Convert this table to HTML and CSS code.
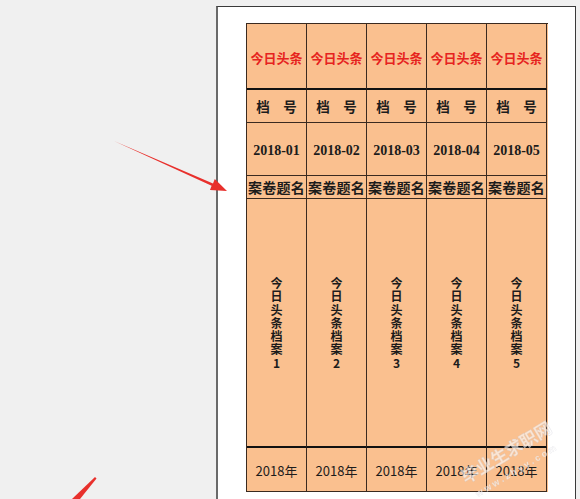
FILE: index.html
```html
<!DOCTYPE html>
<html lang="zh-CN">
<head>
<meta charset="utf-8">
<title>档案盒标签</title>
<link rel="stylesheet" href="styles.css">
</head>
<body>
<div class="page">
  <div class="sheet">
    <div class="cell r1">今日头条</div>
    <div class="cell r1">今日头条</div>
    <div class="cell r1">今日头条</div>
    <div class="cell r1">今日头条</div>
    <div class="cell r1">今日头条</div>

    <div class="cell r2">档　号</div>
    <div class="cell r2">档　号</div>
    <div class="cell r2">档　号</div>
    <div class="cell r2">档　号</div>
    <div class="cell r2">档　号</div>

    <div class="cell r3">2018-01</div>
    <div class="cell r3">2018-02</div>
    <div class="cell r3">2018-03</div>
    <div class="cell r3">2018-04</div>
    <div class="cell r3">2018-05</div>

    <div class="cell r4">案卷题名</div>
    <div class="cell r4">案卷题名</div>
    <div class="cell r4">案卷题名</div>
    <div class="cell r4">案卷题名</div>
    <div class="cell r4">案卷题名</div>

    <div class="cell r5"><span class="vert">今日头条档案1</span></div>
    <div class="cell r5"><span class="vert">今日头条档案2</span></div>
    <div class="cell r5"><span class="vert">今日头条档案3</span></div>
    <div class="cell r5"><span class="vert">今日头条档案4</span></div>
    <div class="cell r5"><span class="vert">今日头条档案5</span></div>

    <div class="cell r6">2018年</div>
    <div class="cell r6">2018年</div>
    <div class="cell r6">2018年</div>
    <div class="cell r6">2018年</div>
    <div class="cell r6">2018年</div>
  </div>
</div>

<svg class="overlay" width="580" height="499" viewBox="0 0 580 499" xmlns="http://www.w3.org/2000/svg">
  <polygon points="114,141 213,183.4 214.8,179 227,191 210,190 211.6,185.8" fill="#e8302c"/>
  <polygon points="95,477 96.5,478.5 80,499 72,499" fill="#e8302c"/>
  <g class="wm">
    <text x="0" y="0" transform="translate(466,484) rotate(-31)" class="wm-big">毕业生求职网</text>
    <text x="0" y="0" transform="translate(478,497) rotate(-31)" class="wm-small">w w w . z h y y . c o m</text>
  </g>
</svg>
</body>
</html>
```

FILE: styles.css
```css
html, body {
  margin: 0;
  padding: 0;
  height: 100%;
  overflow: hidden;
}

body {
  background: #f0f0f0;
  font-family: "Noto Sans CJK SC", "Noto Sans", sans-serif;
  color: #1c1c1c;
}

.page {
  box-sizing: border-box;
  width: 360px;
  height: 494px;
  margin: 6px 0 0 216px;
  background: #ffffff;
  border: 1px solid #3a3a3a;
  border-left: 2px solid #6a6a6a;
  padding: 16px 0 0 28px;
}

.sheet {
  display: grid;
  grid-template-columns: repeat(5, 60px);
  width: 301px;
  border-top: 1px solid #3a2a20;
  border-left: 1px solid #3a2a20;
  background: #fac08f;
}

.cell {
  box-sizing: border-box;
  border-right: 1px solid #3a2a20;
  border-bottom: 1px solid #3a2a20;
  display: flex;
  align-items: center;
  justify-content: center;
  white-space: nowrap;
  font-weight: 700;
  font-size: 14px;
  line-height: 1;
}

.r1 {
  height: 66px;
  border-bottom: 2px solid #111;
  color: #e6231e;
  font-size: 13px;
  padding-top: 2px;
}

.r2 {
  height: 33px;
  font-size: 13.5px;
  padding-top: 1px;
}

.r3 {
  height: 53px;
  font-family: "Liberation Serif", "Noto Sans CJK SC", serif;
  font-size: 14px;
  padding-top: 3px;
}

.r4 {
  height: 23px;
  font-size: 14px;
  letter-spacing: 0.3px;
}

.r5 {
  height: 249px;
  border-bottom: 2px solid #111;
}

.vert {
  display: block;
  width: 1em;
  font-size: 12px;
  line-height: 13.3px;
  white-space: normal;
  word-break: break-all;
  text-align: center;
}

.r6 {
  height: 44px;
  font-weight: 400;
  font-size: 13px;
  padding-top: 2px;
}

.overlay {
  position: fixed;
  left: 0;
  top: 0;
  pointer-events: none;
}

.wm-big {
  font-family: "Noto Sans CJK SC", sans-serif;
  font-size: 17px;
  font-weight: 700;
  fill: rgba(255, 255, 255, 0.6);
  stroke: rgba(200, 200, 210, 0.45);
  stroke-width: 0.6;
}

.wm-small {
  font-family: "Liberation Sans", sans-serif;
  font-size: 9px;
  font-weight: 700;
  fill: rgba(255, 255, 255, 0.6);
  stroke: rgba(200, 200, 210, 0.4);
  stroke-width: 0.4;
}
```
